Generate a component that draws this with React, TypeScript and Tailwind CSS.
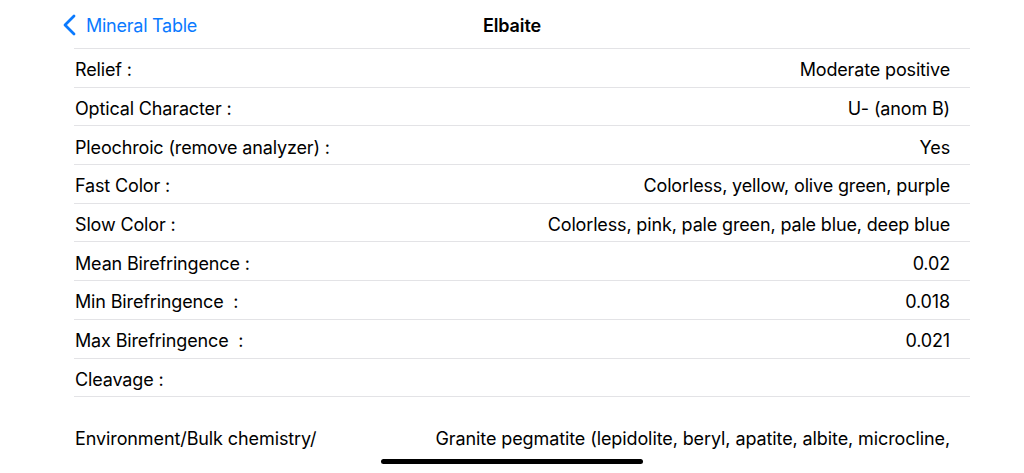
import React from 'react';

const rows: [string, string][] = [
  ['Relief :', 'Moderate positive'],
  ['Optical Character :', 'U- (anom B)'],
  ['Pleochroic (remove analyzer) :', 'Yes'],
  ['Fast Color :', 'Colorless, yellow, olive green, purple'],
  ['Slow Color :', 'Colorless, pink, pale green, pale blue, deep blue'],
  ['Mean Birefringence :', '0.02'],
  ['Min Birefringence  :', '0.018'],
  ['Max Birefringence  :', '0.021'],
  ['Cleavage :', ''],
];

const App: React.FC = () => {
  return (
    <div
      className="relative h-[473px] w-[1024px] overflow-hidden bg-white text-black"
      style={{ fontFamily: 'Inter, "Liberation Sans", sans-serif' }}
    >
      {/* Nav bar */}
      <div className="relative flex h-12 items-center pt-[2px]">
        <div className="flex items-center pl-[62px] text-[#0a7aff]">
          <svg width="15" height="22" viewBox="0 0 15 22" fill="none">
            <path d="M12 2 L3 11 L12 20" stroke="currentColor" strokeWidth="2.8" strokeLinecap="round" strokeLinejoin="round" />
          </svg>
          <span className="ml-[9px] text-[18px] tracking-[-0.25px]">Mineral Table</span>
        </div>
        <div className="absolute inset-x-0 top-0 flex h-12 items-center justify-center pt-[2px]">
          <span className="text-[18px] font-semibold tracking-[-0.1px]">Elbaite</span>
        </div>
      </div>

      {/* Detail rows */}
      <div className="ml-[74px] w-[896px]">
        {rows.map(([label, value]) => (
          <div
            key={label}
            className="flex h-[38.7px] items-center justify-between border-t border-[#e3e3e6] pr-5 pt-1 text-[18px] tracking-[-0.15px]"
          >
            <span className="pl-px whitespace-pre">{label}</span>
            <span>{value}</span>
          </div>
        ))}
        <div className="flex justify-between border-t border-[#e3e3e6] pr-5 pt-[28px] text-[18px] tracking-[-0.1px]">
          <span className="pl-px">Environment/Bulk chemistry/</span>
          <span className="whitespace-nowrap text-right">
            Granite pegmatite (lepidolite, beryl, apatite, albite, microcline,
          </span>
        </div>
      </div>

      {/* Home indicator */}
      <div className="absolute bottom-[9px] left-[381px] h-[5px] w-[262px] rounded-full bg-black" />
    </div>
  );
};

export default App;
